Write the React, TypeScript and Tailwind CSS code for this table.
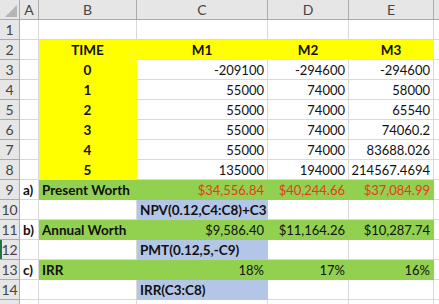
type Fill = "yellow" | "green" | "blue" | "none";

type CellDef = {
  text?: string;
  fill?: Fill;
  align?: "left" | "center" | "right";
  bold?: boolean;
  red?: boolean;
};

const fillClass: Record<Fill, string> = {
  yellow: "bg-[#ffff00] border-[#ffff00]",
  green: "bg-[#92d050] border-[#92d050]",
  blue: "bg-[#b4c6e7] border-[#b4c6e7]",
  none: "bg-white border-[#d9d9d9]",
};

const y = (text: string): CellDef => ({ text, fill: "yellow", align: "center", bold: true });
const n = (text: string): CellDef => ({ text, align: "right" });
const g = (text: string, red = false): CellDef => ({ text, fill: "green", align: "right", red });

const rows: CellDef[][] = [
  [{}, {}, {}, {}, {}],
  [{}, y("TIME"), y("M1"), y("M2"), y("M3")],
  [{}, y("0"), n("-209100"), n("-294600"), n("-294600")],
  [{}, y("1"), n("55000"), n("74000"), n("58000")],
  [{}, y("2"), n("55000"), n("74000"), n("65540")],
  [{}, y("3"), n("55000"), n("74000"), n("74060.2")],
  [{}, y("4"), n("55000"), n("74000"), n("83688.026")],
  [{}, y("5"), n("135000"), n("194000"), n("214567.4694")],
  [
    { text: "a)", bold: true },
    { text: "Present Worth", fill: "green", bold: true },
    g("$34,556.84", true),
    g("$40,244.66", true),
    g("$37,084.99", true),
  ],
  [{}, {}, { text: "NPV(0.12,C4:C8)+C3", fill: "blue", bold: true }, {}, {}],
  [
    { text: "b)", bold: true },
    { text: "Annual Worth", fill: "green", bold: true },
    g("$9,586.40"),
    g("$11,164.26"),
    g("$10,287.74"),
  ],
  [{}, {}, { text: "PMT(0.12,5,-C9)", fill: "blue", bold: true }, {}, {}],
  [
    { text: "c)", bold: true },
    { text: "IRR", fill: "green", bold: true },
    g("18%"),
    g("17%"),
    g("16%"),
  ],
  [{}, {}, { text: "IRR(C3:C8)", fill: "blue", bold: true }, {}, {}],
  [{}, {}, {}, {}, {}],
];

const letters = ["A", "B", "C", "D", "E", ""];

function Cell({ cell }: { cell: CellDef }) {
  const fill = cell.fill ?? "none";
  const align =
    cell.align === "right" ? "justify-end pr-[3px]" : cell.align === "center" ? "justify-center" : "justify-start pl-[3px]";
  return (
    <div
      className={`h-[20px] flex items-end pb-[1px] overflow-visible whitespace-nowrap border-r border-b ${fillClass[fill]} ${align} ${
        cell.bold ? "font-bold text-[13.5px]" : "text-[13px]"
      } ${cell.red ? "text-[#e8391b]" : "text-[#111]"}`}
    >
      {cell.text}
    </div>
  );
}

export default function App() {
  return (
    <div
      className="w-[439px] h-[304px] overflow-hidden bg-white leading-[16px]"
      style={{ fontFamily: "Lato, 'Open Sans', sans-serif" }}
    >
      <div className="grid grid-cols-[20px_19px_98px_131px_81px_85px_20px]">
        {/* corner */}
        <div className="h-[20px] relative bg-[#e6e6e6] border-r border-b border-[#ababab]">
          <div className="absolute right-[2px] bottom-[2px] w-0 h-0 border-l-[12px] border-l-transparent border-b-[12px] border-b-[#b5b5b5]" />
        </div>
        {letters.map((l, i) => (
          <div
            key={i}
            className="h-[20px] flex items-center justify-center bg-[#e6e6e6] border-r border-b border-[#ababab] text-[#444] text-[14px]"
          >
            {l}
          </div>
        ))}

        {rows.map((row, r) => (
          <Row key={r} index={r + 1} cells={row} />
        ))}
      </div>
    </div>
  );
}

function Row({ index, cells }: { index: number; cells: CellDef[] }) {
  return (
    <>
      <div className="h-[20px] relative flex items-center justify-center bg-[#e6e6e6] border-r border-b border-[#ababab] text-[#444] text-[14px]">
        {index < 15 ? index : ""}
        {index === 12 && <div className="absolute left-0 top-0 bottom-0 w-[2px] bg-[#217346]" />}
      </div>
      {cells.map((c, i) => (
        <Cell key={i} cell={c} />
      ))}
      <Cell cell={{}} />
    </>
  );
}
